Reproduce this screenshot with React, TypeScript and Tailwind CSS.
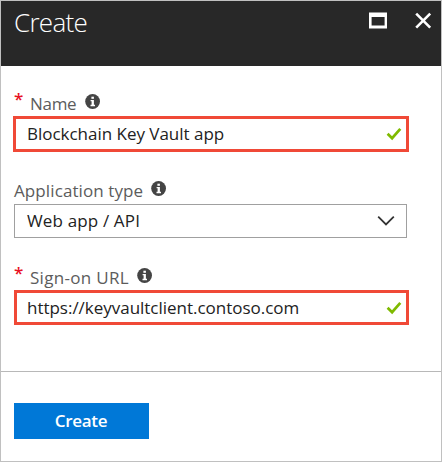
import type { ReactNode } from 'react';

function InfoIcon() {
  return (
    <svg className="mt-[2px] shrink-0" width="16" height="16" viewBox="0 0 16 16" aria-hidden="true">
      <circle cx="7.6" cy="7.5" r="7.4" fill="#444444" />
      <rect x="6.4" y="2.7" width="2.5" height="2.1" fill="#fff" />
      <path d="M5.6 5.9h3.3v4.9h1.1v1.4H5.5v-1.4h1.1V7.3h-1z" fill="#fff" />
    </svg>
  );
}

function CheckIcon() {
  return (
    <svg className="shrink-0" width="16" height="14" viewBox="0 0 16 14" aria-hidden="true">
      <path d="M1.6 6.7L6.1 11.2L14.3 1.8" fill="none" stroke="#7fba00" strokeWidth="2.7" />
    </svg>
  );
}

function Required() {
  return (
    <span className="-mt-[3px] w-[17px] shrink-0 text-[17px] font-semibold leading-5 text-[#e81123]">*</span>
  );
}

function Label({ children }: { children: ReactNode }) {
  return <div className="flex h-6 items-start whitespace-nowrap text-[#5c5c5c]">{children}</div>;
}

export default function App() {
  return (
    <div className="flex h-[462px] w-[442px] flex-col border border-[#c0c0c0] bg-white font-['Open_Sans','Noto_Sans',sans-serif] text-[17px] leading-6">
      <header className="flex h-[65px] shrink-0 items-start bg-[#282828] pl-[12px] text-white">
        <h1 className="mt-[3px] flex-1 pl-px text-[26px] font-light leading-9 tracking-[-0.7px]">Create</h1>
        <svg className="mt-[11px]" width="19" height="17" viewBox="0 0 19 17" aria-hidden="true">
          <path d="M-.4 .5h18.4v16H-.4zM2.6 5v8.5h13V5z" fill="#fff" fillRule="evenodd" />
        </svg>
        <svg className="ml-[27px] mr-[9px] mt-[11px]" width="17" height="17" viewBox="0 0 17 17" aria-hidden="true">
          <path d="M1.2 1.7l14 14M15.2 1.7l-14 14" stroke="#fff" strokeWidth="2.6" />
        </svg>
      </header>

      <main className="flex h-[305px] shrink-0 flex-col pl-[13px]">
        <div className="mt-[26px]">
          <Label>
            <Required />
            <span className="-ml-px w-[55px] tracking-[-0.3px]">Name</span>
            <InfoIcon />
          </Label>
        </div>
        <div className="-ml-px flex h-9 w-[396px] items-center justify-between border-3 border-[#f04937] pl-[11px] pr-1 text-[#222]">
          <span className="tracking-[-0.02px]">Blockchain Key Vault app</span>
          <CheckIcon />
        </div>

        <div className="mt-[27px]">
          <Label>
            <span className="w-[137px] tracking-[0.1px]">Application type</span>
            <InfoIcon />
          </Label>
        </div>
        <div className="mt-px flex h-[34px] w-[393px] items-center justify-between border border-[#a0a0a0] pl-[12px] pr-[11px] text-[#222]">
          <span className="tracking-[0.15px]">Web app / API</span>
          <svg width="18" height="12" viewBox="0 0 18 12" aria-hidden="true">
            <path d="M1.2 1.7L9 9.4L16.8 1.7" fill="none" stroke="#333" strokeWidth="1.8" />
          </svg>
        </div>

        <div className="mt-[28px]">
          <Label>
            <Required />
            <span className="-ml-px w-[107px] tracking-[0.3px]">Sign-on URL</span>
            <InfoIcon />
          </Label>
        </div>
        <div className="flex h-[35px] w-[395px] items-center justify-between border-3 border-[#f04937] pl-[10px] pr-1 text-[#222]">
          <span className="tracking-[-0.02px]">https://keyvaultclient.contoso.com</span>
          <CheckIcon />
        </div>
      </main>

      <footer className="flex-1 border-t border-[#b8b8b8] pl-[13px] pt-[31px]">
        <button className="block h-9 w-[135px] bg-[#0078d7] pr-px text-center font-semibold tracking-[-0.3px] text-white">Create</button>
      </footer>
    </div>
  );
}
